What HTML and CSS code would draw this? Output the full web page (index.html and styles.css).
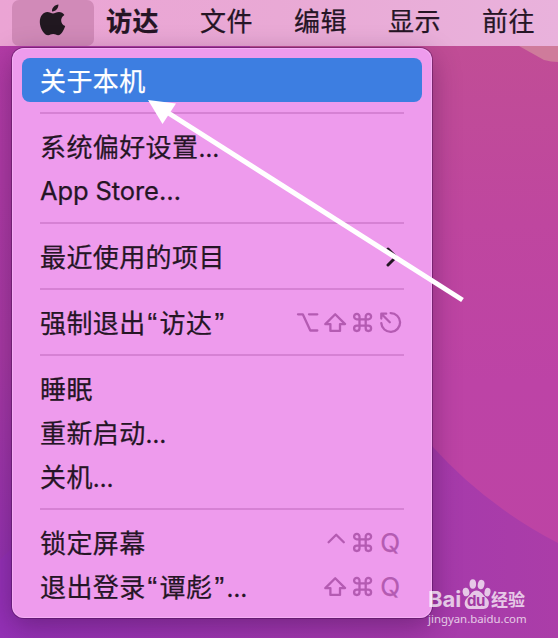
FILE: index.html
```html
<!DOCTYPE html>
<html lang="zh-CN">

<head>
    <meta charset="UTF-8">
    <meta name="viewport" content="width=device-width, initial-scale=1.0">
    <title>访达</title>
    <link rel="stylesheet" href="styles.css">
</head>

<body>
    <!-- 桌面壁纸 -->
    <svg class="wallpaper" viewBox="0 0 558 638">
        <defs>
            <linearGradient id="left" x1="0" y1="0" x2="0.1" y2="1">
                <stop offset="0" stop-color="#b43ca6" />
                <stop offset="0.55" stop-color="#a83aa4" />
                <stop offset="1" stop-color="#8c2fb4" />
            </linearGradient>
            <linearGradient id="right" x1="0" y1="0" x2="0" y2="1">
                <stop offset="0" stop-color="#c14f93" />
                <stop offset="0.35" stop-color="#bf469f" />
                <stop offset="0.6" stop-color="#bd43a6" />
                <stop offset="1" stop-color="#bd44a3" />
            </linearGradient>
            <linearGradient id="bottom" x1="0" y1="0" x2="1" y2="0">
                <stop offset="0" stop-color="#9431b6" />
                <stop offset="1" stop-color="#ab3da8" />
            </linearGradient>
            <symbol id="option" viewBox="0 0 28 28">
                <path d="M6 6.300h4.800l7.500 16.200h7M17 6.300h8.300" />
            </symbol>
            <symbol id="shift" viewBox="0 0 28 28">
                <path d="M15.200 6.200L5.300 16.100H10.400v6.800h9.600v-6.800h5.100z" />
            </symbol>
            <symbol id="command" viewBox="0 0 28 28">
                <path d="M11.500 11.300V8.700a2.700 2.700 0 1 0-2.700 2.600h11.600a2.700 2.700 0 1 0-2.700-2.600v11.600a2.700 2.700 0 1 0 2.700-2.700H8.800a2.700 2.700 0 1 0 2.700 2.700z" />
            </symbol>
            <symbol id="power" viewBox="0 0 28 28">
                <path d="M14.600 5.100a9.400 9.400 0 1 1-9.300 10M5.300 10.600V5.700h4.900M5.800 6.200l8 8" />
            </symbol>
            <symbol id="control" viewBox="0 0 28 28">
                <path d="M8.600 14.300l7.600-7.600 7.600 7.600" />
            </symbol>
        </defs>
        <rect width="558" height="638" fill="url(#left)" />
        <rect x="250" width="308" height="638" fill="url(#right)" />
        <path d="M0 560L60 500H380L432 446Q485 505 558 543V638H0z" fill="url(#bottom)" />
        <path d="M519 46L544 60Q551 62 558 62V46z" fill="#cf7b9b" />
    </svg>

    <nav class="menubar">
        <span class="apple">
            <svg width="28" height="34" viewBox="0 0 28 34">
                <path d="M19.400 0.500c.3 3.700-2.900 7.200-6.400 6.900-.3-3.600 2.900-6.700 6.400-6.900zM14 9.400c1.700 0 3.300-1.400 6-1.400 2.200 0 4.200 1.200 5.400 2.900-4.800 2.900-4 9.300.8 11.200-1.300 3.500-3.700 9.200-7 9.200-1.900 0-2.700-1.200-5-1.200s-3.200 1.200-5 1.200C5.300 31.300.8 24 .8 17.900.8 11.800 4.600 8 8.300 8c2.400 0 4.200 1.400 5.700 1.400z" />
            </svg>
        </span>
        <span class="menubar-item app-name">访达</span>
        <span class="menubar-item">文件</span>
        <span class="menubar-item">编辑</span>
        <span class="menubar-item">显示</span>
        <span class="menubar-item">前往</span>
    </nav>

    <div class="menu">
        <div class="item active">关于本机</div>
        <hr>
        <div class="item"><span>系统偏好设置<span class="dots">…</span></span></div>
        <div class="item latin">App Store…</div>
        <hr>
        <div class="item">最近使用的项目
            <svg class="chevron" width="12" height="20" viewBox="0 0 12 20"><path d="M2 2l8 8-8 8" /></svg>
        </div>
        <hr>
        <div class="item">
            <span>强制退出<span class="quote">“</span>访达<span class="quote">”</span></span>
            <span class="keys">
                <svg><use href="#option" /></svg>
                <svg><use href="#shift" /></svg>
                <svg><use href="#command" /></svg>
                <svg><use href="#power" /></svg>
            </span>
        </div>
        <hr>
        <div class="item">睡眠</div>
        <div class="item"><span>重新启动<span class="dots">…</span></span></div>
        <div class="item"><span>关机<span class="dots">…</span></span></div>
        <hr>
        <div class="item">锁定屏幕
            <span class="keys">
                <svg><use href="#control" /></svg>
                <svg><use href="#command" /></svg>
                <span class="key">Q</span>
            </span>
        </div>
        <div class="item">
            <span>退出登录<span class="quote">“</span>谭彪<span class="quote">”</span><span class="dots">…</span></span>
            <span class="keys">
                <svg><use href="#shift" /></svg>
                <svg><use href="#command" /></svg>
                <span class="key">Q</span>
            </span>
        </div>
    </div>

    <!-- 箭头标注 -->
    <svg class="arrow" viewBox="0 0 558 638">
        <path d="M166 111.500L462.500 300" />
        <polygon points="148,100 176,103.500 162.500,124" />
    </svg>

    <!-- 水印 -->
    <div class="watermark">
        <div class="brand">
            <span class="bai">Bai</span>
            <span class="paw">
                <svg width="30" height="32" viewBox="0 0 30 32">
                    <ellipse cx="4" cy="14" rx="3.300" ry="4.300" transform="rotate(-12 4 14)" />
                    <ellipse cx="10.800" cy="6" rx="3.300" ry="4.700" />
                    <ellipse cx="19.200" cy="6.500" rx="3.300" ry="4.700" transform="rotate(12 19 6)" />
                    <ellipse cx="25.500" cy="14" rx="3" ry="4.300" transform="rotate(12 25 14)" />
                    <path d="M14.500 12.500c4.500 0 6 4 9 6.500 3 2.600 4.300 5.300 2.800 9-1.600 3.600-5.800 3-11.300 3s-9.700 1-11.600-2.800c-1.700-3.400 0-6.700 2.600-9.200 2.700-2.400 4-6.500 8.500-6.500z" />
                </svg>
                <span class="du">du</span>
            </span>
            <span class="jy">经验</span>
        </div>
        <div class="site">jingyan.baidu.com</div>
    </div>
</body>

</html>
```
FILE: styles.css
```css
body {
    margin: 0;
    width: 558px;
    height: 638px;
    overflow: hidden;
    position: relative;
    font-family: Inter, 'Noto Sans CJK SC', sans-serif;
    font-size: 26px;
    color: #251525;
}

.wallpaper,
.arrow {
    position: absolute;
    top: 0;
    left: 0;
    width: 558px;
    height: 638px;
}

/* 顶部菜单栏 */
.menubar {
    position: relative;
    display: flex;
    height: 46px;
    padding-left: 12px;
    background: linear-gradient(90deg, #eba4d4, #e9a9d5 50%, #e9b2dc);
}

.apple {
    display: flex;
    flex-shrink: 0;
    justify-content: center;
    width: 82px;
    margin-right: 12px;
    padding-top: 4px;
    box-sizing: border-box;
    border-radius: 7px;
    background: #d18ab8;
}

.apple svg {
    fill: #211820;
}

.menubar-item {
    flex-shrink: 0;
    width: 94px;
    line-height: 43px;
    letter-spacing: 0.4px;
    white-space: nowrap;
    -webkit-text-stroke: 0.25px;
}

.app-name {
    font-weight: bold;
}

/* 下拉菜单 */
.menu {
    position: relative;
    width: 420px;
    margin: 2px 0 0 12px;
    padding: 10px;
    box-sizing: border-box;
    border-radius: 12px;
    background: #ee9bed;
    box-shadow: 0 0 0 1px rgba(70, 10, 80, 0.45), 0 8px 28px rgba(50, 10, 60, 0.4), inset 0 0 0 1px rgba(255, 200, 255, 0.45);
}

.item {
    display: flex;
    align-items: center;
    justify-content: space-between;
    height: 44px;
    padding: 4px 18px 0;
    line-height: 42px;
    box-sizing: border-box;
    letter-spacing: 0.4px;
    white-space: nowrap;
    -webkit-text-stroke: 0.25px;
}

.item.latin {
    padding-top: 2px;
    font-size: 25.5px;
    letter-spacing: -0.1px;
}

.item.active {
    border-radius: 8px;
    background: #3d7ee1;
    color: #fff;
}

.quote {
    display: inline-block;
    width: 14px;
    line-height: 1;
    text-align: center;
    font-family: 'Liberation Sans', sans-serif;
    font-size: 29px;
}

.dots {
    font-size: 24px;
    line-height: 1;
}

.menu hr {
    height: 2px;
    margin: 10px 18px;
    border: 0;
    background: #d681d4;
}

.chevron {
    margin: 0 6px 2px 0;
    fill: none;
    stroke: #251525;
    stroke-width: 3;
    stroke-linecap: round;
    stroke-linejoin: round;
}

.keys {
    display: flex;
    height: 28px;
    margin-top: -4px;
    color: #b45bb2;
}

.keys svg {
    width: 28px;
    height: 28px;
    fill: none;
    stroke: #b45bb2;
    stroke-width: 2.3;
    stroke-linecap: round;
    stroke-linejoin: round;
}

.key {
    width: 29px;
    margin-right: -1px;
    line-height: 30px;
    text-align: center;
}

.arrow path {
    stroke: #fff;
    stroke-width: 5;
}

.arrow polygon {
    fill: #fff;
}

/* 右下角水印 */
.watermark {
    position: absolute;
    left: 428px;
    top: 578px;
    width: 110px;
    color: #fff;
    opacity: 0.72;
}

.brand {
    display: flex;
    align-items: flex-end;
    height: 32px;
}

.bai {
    width: 34px;
    font-size: 22px;
    font-weight: bold;
    line-height: 22px;
    letter-spacing: -0.1px;
}

.paw {
    position: relative;
    width: 29px;
    height: 32px;
}

.paw svg {
    fill: #fff;
}

.du {
    position: absolute;
    left: 5px;
    top: 15px;
    font-size: 15px;
    font-weight: bold;
    line-height: 16px;
    letter-spacing: -0.5px;
    color: #a03aa0;
}

.jy {
    font-size: 17px;
    font-weight: bold;
    line-height: 19px;
}

.site {
    font-family: 'Noto Sans', sans-serif;
    font-size: 11.4px;
    line-height: 17px;
}
```
